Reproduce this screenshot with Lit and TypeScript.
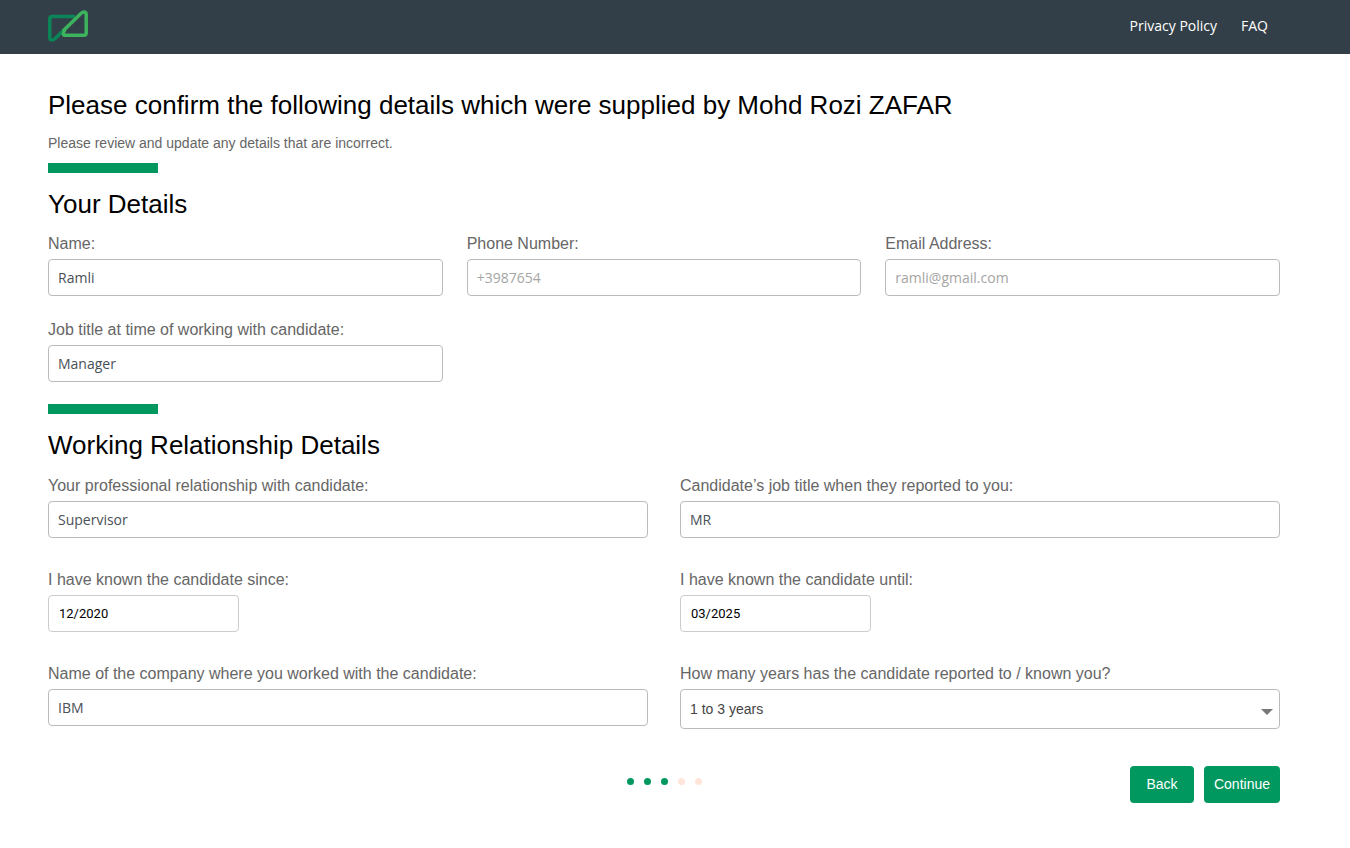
import { LitElement, html, css } from "lit";
import { customElement, property } from "lit/decorators.js";

@customElement("site-header")
class SiteHeader extends LitElement {
  static styles = css`
    :host {
      display: block;
      background: #333f48;
    }
    .bar {
      display: flex;
      align-items: center;
      justify-content: space-between;
      height: 54px;
      padding: 0 70px 2px 48px;
      box-sizing: border-box;
    }
    .logo {
      display: block;
      width: 40px;
      height: 32px;
    }
    .nav {
      display: flex;
    }
    .link {
      padding: 0 12px;
      font: 14px/20px "Open Sans", sans-serif;
      color: #fff;
      text-decoration: none;
    }
  `;

  render() {
    return html`
      <header class="bar">
        <a href="#" aria-label="Home">
          <svg class="logo" viewBox="0 0 40 32" fill="none" stroke-width="3.5" stroke-linejoin="round" stroke-linecap="butt">
            <path d="M27 6.5H4.2Q1.8 6.5 1.8 8.9V27.5Q1.8 30 4 30Q5.6 30 6.8 28.8L16 20" stroke="#0b8457" />
            <path d="M15 21L33.2 3.2Q34.6 1.9 36 1.9Q38.2 1.9 38.2 4.4V23Q38.2 25.3 36 25.3H17.5Q15.3 25.3 15.3 23.4Q15.3 22.2 17 20" stroke="#3cb35c" />
          </svg>
        </a>
        <nav class="nav">
          <a class="link" href="#privacy">Privacy Policy</a>
          <a class="link" href="#faq">FAQ</a>
        </nav>
      </header>
    `;
  }
}

@customElement("step-dots")
class StepDots extends LitElement {
  @property({ type: Number }) total = 5;
  @property({ type: Number }) current = 1;

  static styles = css`
    :host {
      display: flex;
      gap: 10px;
    }
    .dot {
      width: 7px;
      height: 7px;
      border-radius: 50%;
      background: #ffe5da;
    }
    .done {
      background: #00985f;
    }
  `;

  render() {
    return Array.from(
      { length: this.total },
      (_, i) => html`<span class="dot ${i < this.current ? "done" : ""}"></span>`
    );
  }
}

@customElement("app-root")
class AppRoot extends LitElement {
  static styles = css`
    :host {
      display: block;
      min-height: 100vh;
      background: #fff;
      font-family: "Liberation Sans", Arial, sans-serif;
      color: #000;
    }
    .page {
      padding: 36px 70px 45px 48px;
    }
    .title {
      margin: 0;
      font-size: 26px;
      line-height: 30px;
      font-weight: 400;
    }
    .intro {
      margin: 13px 0 10px;
      font-size: 14px;
      line-height: 20px;
      color: #666;
    }
    .accent {
      width: 110px;
      height: 10px;
      margin-bottom: 16px;
      background: #00985f;
    }
    .grid {
      display: grid;
    }
    .thirds {
      grid-template-columns: repeat(3, 1fr);
      gap: 24px;
      margin: 15px 0 22px;
    }
    .halves {
      grid-template-columns: repeat(2, 1fr);
      gap: 32px;
      margin-top: 16px;
    }
    .field {
      display: flex;
      flex-direction: column;
      align-items: flex-start;
      gap: 5px;
    }
    .label {
      font-size: 16px;
      line-height: 20px;
      color: #666;
    }
    .control {
      box-sizing: border-box;
      width: 100%;
      height: 37px;
      margin: 0;
      padding: 0 9px;
      border: 1px solid #bbb;
      border-radius: 4px;
      background: #fff;
      font: 14px "Open Sans", sans-serif;
      color: #495057;
    }
    .control::placeholder {
      color: #a5a5a5;
      opacity: 1;
    }
    .date {
      width: 191px;
      padding: 0 10px;
      border-color: #ccc;
      font: 13px Roboto, sans-serif;
      color: #000;
    }
    .picker {
      display: grid;
      width: 100%;
      align-items: center;
    }
    .select {
      grid-area: 1 / 1;
      height: 40px;
      appearance: none;
      font-family: "Liberation Sans", Arial, sans-serif;
      color: #444;
    }
    .arrow {
      grid-area: 1 / 1;
      justify-self: end;
      width: 12px;
      height: 6px;
      margin: 5px 7px 0 0;
      fill: #777;
      pointer-events: none;
    }
    .footer {
      display: grid;
      grid-template-columns: 1fr auto 1fr;
      margin-top: 37px;
    }
    .dots {
      grid-column: 2;
      margin-top: 12px;
    }
    .actions {
      display: flex;
      justify-content: flex-end;
      gap: 10px;
    }
    .button {
      height: 37px;
      min-width: 64px;
      padding: 0 10px 2px;
      border: 0;
      border-radius: 4px;
      background: #00985f;
      color: #fff;
      font: 14px "Liberation Sans", Arial, sans-serif;
    }
  `;

  private field(id: string, label: string, value: string, placeholder = "", kind = "") {
    return html`
      <div class="field">
        <label class="label" for=${id}>${label}</label>
        <input class="control ${kind}" id=${id} type="text" .value=${value} placeholder=${placeholder} />
      </div>
    `;
  }

  render() {
    return html`
      <site-header></site-header>
      <main class="page">
        <h1 class="title">Please confirm the following details which were supplied by Mohd Rozi ZAFAR</h1>
        <p class="intro">Please review and update any details that are incorrect.</p>
        <form>
          <section>
            <div class="accent"></div>
            <h2 class="title">Your Details</h2>
            <div class="grid thirds">
              ${this.field("name", "Name:", "Ramli")}
              ${this.field("phone", "Phone Number:", "", "+3987654")}
              ${this.field("email", "Email Address:", "", "ramli@gmail.com")}
              ${this.field("job", "Job title at time of working with candidate:", "Manager")}
            </div>
          </section>
          <section>
            <div class="accent"></div>
            <h2 class="title">Working Relationship Details</h2>
            <div class="grid halves">
              ${this.field("relationship", "Your professional relationship with candidate:", "Supervisor")}
              ${this.field("candidate-job", "Candidate’s job title when they reported to you:", "MR")}
              ${this.field("since", "I have known the candidate since:", "12/2020", "", "date")}
              ${this.field("until", "I have known the candidate until:", "03/2025", "", "date")}
              ${this.field("company", "Name of the company where you worked with the candidate:", "IBM")}
              <div class="field">
                <label class="label" for="years">How many years has the candidate reported to / known you?</label>
                <div class="picker">
                  <select class="control select" id="years">
                    <option>1 to 3 years</option>
                  </select>
                  <svg class="arrow" viewBox="0 0 12 6" aria-hidden="true"><path d="M0 0H12L6 6Z" /></svg>
                </div>
              </div>
            </div>
          </section>
          <footer class="footer">
            <step-dots class="dots" .total=${5} .current=${3}></step-dots>
            <div class="actions">
              <button class="button" type="button">Back</button>
              <button class="button" type="button">Continue</button>
            </div>
          </footer>
        </form>
      </main>
    `;
  }
}
